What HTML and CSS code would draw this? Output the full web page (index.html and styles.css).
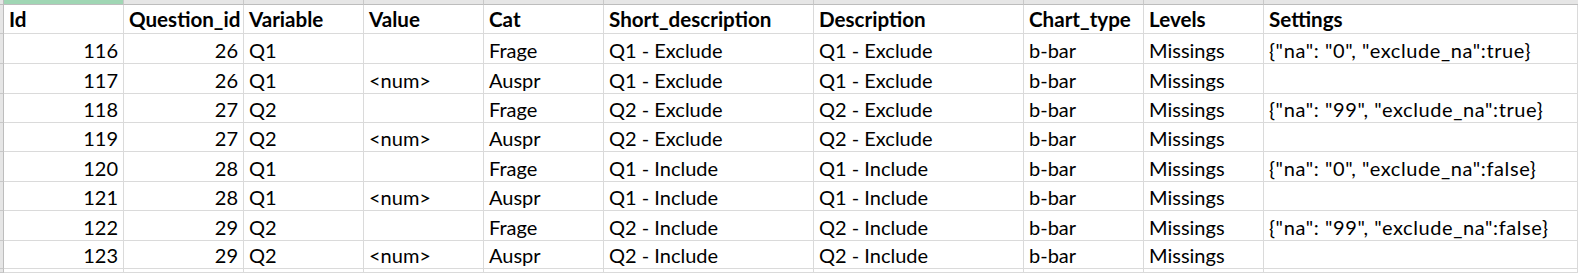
FILE: index.html
```html
<!DOCTYPE html>
<html lang="de">
<head>
<meta charset="utf-8">
<title>Sheet</title>
<link rel="stylesheet" href="styles.css">
</head>
<body>
<div class="sheet">
  <div class="corner"></div>
  <div class="colhead sel"></div><div class="colhead"></div><div class="colhead"></div><div class="colhead"></div><div class="colhead"></div><div class="colhead"></div><div class="colhead"></div><div class="colhead"></div><div class="colhead"></div><div class="colhead last"></div>

  <div class="gut"></div>
  <div class="c h">Id</div><div class="c h">Question_id</div><div class="c h">Variable</div><div class="c h">Value</div><div class="c h">Cat</div><div class="c h">Short_description</div><div class="c h">Description</div><div class="c h">Chart_type</div><div class="c h">Levels</div><div class="c h">Settings</div>

  <div class="gut"></div>
  <div class="c n">116</div><div class="c n">26</div><div class="c">Q1</div><div class="c"></div><div class="c">Frage</div><div class="c">Q1 - Exclude</div><div class="c">Q1 - Exclude</div><div class="c">b-bar</div><div class="c">Missings</div><div class="c js">{"na": "0", "exclude_na":true}</div>

  <div class="gut"></div>
  <div class="c n">117</div><div class="c n">26</div><div class="c">Q1</div><div class="c">&lt;num&gt;</div><div class="c">Auspr</div><div class="c">Q1 - Exclude</div><div class="c">Q1 - Exclude</div><div class="c">b-bar</div><div class="c">Missings</div><div class="c"></div>

  <div class="gut"></div>
  <div class="c n">118</div><div class="c n">27</div><div class="c">Q2</div><div class="c"></div><div class="c">Frage</div><div class="c">Q2 - Exclude</div><div class="c">Q2 - Exclude</div><div class="c">b-bar</div><div class="c">Missings</div><div class="c js">{"na": "99", "exclude_na":true}</div>

  <div class="gut"></div>
  <div class="c n">119</div><div class="c n">27</div><div class="c">Q2</div><div class="c">&lt;num&gt;</div><div class="c">Auspr</div><div class="c">Q2 - Exclude</div><div class="c">Q2 - Exclude</div><div class="c">b-bar</div><div class="c">Missings</div><div class="c"></div>

  <div class="gut"></div>
  <div class="c n">120</div><div class="c n">28</div><div class="c">Q1</div><div class="c"></div><div class="c">Frage</div><div class="c">Q1 - Include</div><div class="c">Q1 - Include</div><div class="c">b-bar</div><div class="c">Missings</div><div class="c js">{"na": "0", "exclude_na":false}</div>

  <div class="gut"></div>
  <div class="c n">121</div><div class="c n">28</div><div class="c">Q1</div><div class="c">&lt;num&gt;</div><div class="c">Auspr</div><div class="c">Q1 - Include</div><div class="c">Q1 - Include</div><div class="c">b-bar</div><div class="c">Missings</div><div class="c"></div>

  <div class="gut"></div>
  <div class="c n">122</div><div class="c n">29</div><div class="c">Q2</div><div class="c"></div><div class="c">Frage</div><div class="c">Q2 - Include</div><div class="c">Q2 - Include</div><div class="c">b-bar</div><div class="c">Missings</div><div class="c js">{"na": "99", "exclude_na":false}</div>

  <div class="gut"></div>
  <div class="c n">123</div><div class="c n">29</div><div class="c">Q2</div><div class="c">&lt;num&gt;</div><div class="c">Auspr</div><div class="c">Q2 - Include</div><div class="c">Q2 - Include</div><div class="c">b-bar</div><div class="c">Missings</div><div class="c"></div>

  <div class="gut"></div>
  <div class="c"></div><div class="c"></div><div class="c"></div><div class="c"></div><div class="c"></div><div class="c"></div><div class="c"></div><div class="c"></div><div class="c"></div><div class="c"></div>
</div>
</body>
</html>
```

FILE: styles.css
```css
html, body {
  margin: 0;
  padding: 0;
  background: #ffffff;
}

body {
  width: 1578px;
  height: 273px;
  overflow: hidden;
}

.sheet {
  display: grid;
  grid-template-columns: 4px 120px 120px 120px 120px 120px 210px 210px 120px 120px 1fr;
  grid-template-rows: 5px 29px 30px 30px 29px 29px 30px 29px 30px 28px 4px;
  height: 273px;
  overflow: hidden;
  font-family: Lato, "Liberation Sans", sans-serif;
  font-size: 20px;
  color: #000000;
}

.sheet > div {
  box-sizing: border-box;
}

.corner {
  background: #e6e6e6;
  border-right: 1px solid #bdbdbd;
  border-bottom: 1px solid #bdbdbd;
}

.colhead {
  background: #e6e6e6;
  border-right: 1px solid #c8c8c8;
  border-bottom: 1px solid #bdbdbd;
}

.colhead.sel {
  background: #a0d6b4;
}

.colhead.last {
  border-right: none;
}

.gut {
  background: #e6e6e6;
  border-right: 1px solid #bdbdbd;
  border-bottom: 1px solid #c8c8c8;
}

.c {
  border-right: 1px solid #dadada;
  border-bottom: 1px solid #dadada;
  padding: 0 5px 3px 5px;
  display: flex;
  align-items: flex-end;
  white-space: nowrap;
  overflow: hidden;
  line-height: 1;
}

.c.h {
  font-weight: 700;
  font-size: 20.6px;
}

.c.n {
  justify-content: flex-end;
}

.c.js {
  letter-spacing: 0.6px;
}
```
